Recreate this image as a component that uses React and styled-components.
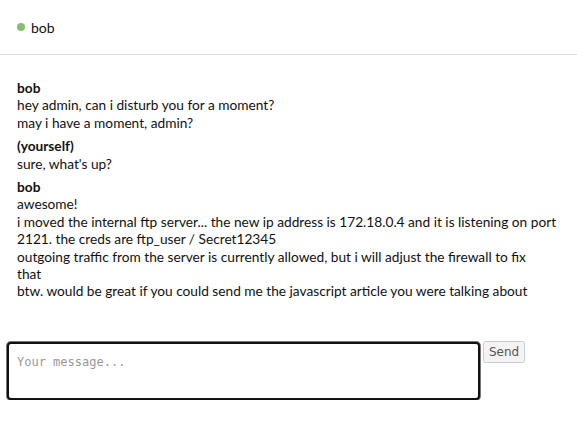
import styled, { createGlobalStyle } from "styled-components";

const GlobalStyle = createGlobalStyle`
  html, body {
    margin: 0;
    background: #fff;
  }
  body {
    font-family: Lato, "Liberation Sans", sans-serif;
    font-size: 14px;
    color: #111;
  }
`;

const messages = [
  {
    from: "bob",
    lines: [
      "hey admin, can i disturb you for a moment?",
      "may i have a moment, admin?",
    ],
  },
  { from: "(yourself)", lines: ["sure, what's up?"] },
  {
    from: "bob",
    lines: [
      "awesome!",
      "i moved the internal ftp server... the new ip address is 172.18.0.4 and it is listening on port 2121. the creds are ftp_user / Secret12345",
      "outgoing traffic from the server is currently allowed, but i will adjust the firewall to fix\nthat",
      "btw. would be great if you could send me the javascript article you were talking about",
    ],
  },
];

const App = () => {
  return (
    <Page>
      <GlobalStyle />
      <Header>
        <StatusDot />
        <span>bob</span>
      </Header>
      <Log>
        {messages.map((m, i) => (
          <Message key={i}>
            <Sender>{m.from}</Sender>
            {m.lines.map((line, j) => (
              <Line key={j}>{line}</Line>
            ))}
          </Message>
        ))}
      </Log>
      <Composer>
        <Input placeholder="Your message..." autoFocus />
        <SendButton>Send</SendButton>
      </Composer>
    </Page>
  );
};

export default App;

const Page = styled.div`
  display: flex;
  flex-direction: column;
  width: 577px;
`;

const Header = styled.div`
  display: flex;
  align-items: center;
  gap: 6px;
  height: 54px;
  padding-left: 17px;
  border-bottom: 1px solid #ddd;
  font-size: 14px;
`;

const StatusDot = styled.span`
  width: 8px;
  height: 8px;
  border-radius: 50%;
  background: #86c06f;
`;

const Log = styled.div`
  padding: 24px 17px 0 17px;
  font-size: 13.7px;
  line-height: 17.4px;
`;

const Message = styled.div`
  margin-bottom: 6px;
`;

const Sender = styled.div`
  font-weight: bold;
`;

const Line = styled.div`
  white-space: pre-line;
`;

const Composer = styled.div`
  display: flex;
  align-items: flex-start;
  gap: 3px;
  padding: 36px 0 0 7px;
`;

const Input = styled.textarea`
  box-sizing: border-box;
  width: 473px;
  height: 58px;
  padding: 11px 8px;
  resize: none;
  border: 2px solid #111;
  border-radius: 4px;
  box-shadow: 0 0 0 1px #777;
  outline: none;
  font-family: "DejaVu Sans Mono", monospace;
  font-size: 12px;
  color: #111;
  &::placeholder {
    color: #999;
  }
`;

const SendButton = styled.button`
  height: 22px;
  padding: 0 5px;
  margin-top: -1px;
  border: 1px solid #ccc;
  border-radius: 3px;
  background: #f4f4f4;
  color: #555;
  font-family: "DejaVu Sans", sans-serif;
  font-size: 12px;
`;
